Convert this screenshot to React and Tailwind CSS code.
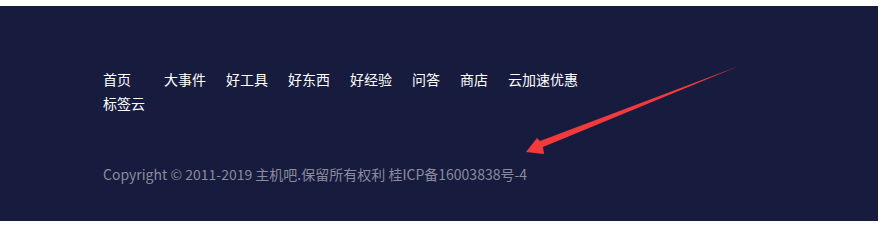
const navItems = ['大事件', '好工具', '好东西', '好经验', '问答', '商店', '云加速优惠', '标签云']

const font = { fontFamily: '"Noto Sans CJK SC", "Noto Sans", sans-serif' }

// annotation arrow drawn over the footer
const Arrow = () => (
  <svg className="absolute left-0 top-0 block pointer-events-none" width="880" height="221" viewBox="0 0 880 221">
    <polygon
      points="526,152 537,138 540,141 739,66 543,147 544,154"
      fill="#f23a3c"
    />
  </svg>
)

export default function App() {
  return (
    <div className="relative flex flex-col w-[880px] h-[221px] overflow-hidden bg-white pt-[6px] pr-[2px]">
      <footer className="flex-1 bg-[#171b3e] pl-[103px] pt-[61px]" style={font}>
        <nav className="flex flex-wrap w-[530px] text-[14px] leading-[24px] text-white">
          <a className="w-[41px] mr-5">首页</a>
          {navItems.map((item) => (
            <a key={item} className="mr-5 whitespace-nowrap">{item}</a>
          ))}
        </nav>
        <p className="mt-[47px] text-[14px] leading-[24px] text-[#8a8b9c]">
          Copyright © 2011-2019 主机吧.保留所有权利 桂ICP备16003838号-4
        </p>
      </footer>
      <Arrow />
    </div>
  )
}
